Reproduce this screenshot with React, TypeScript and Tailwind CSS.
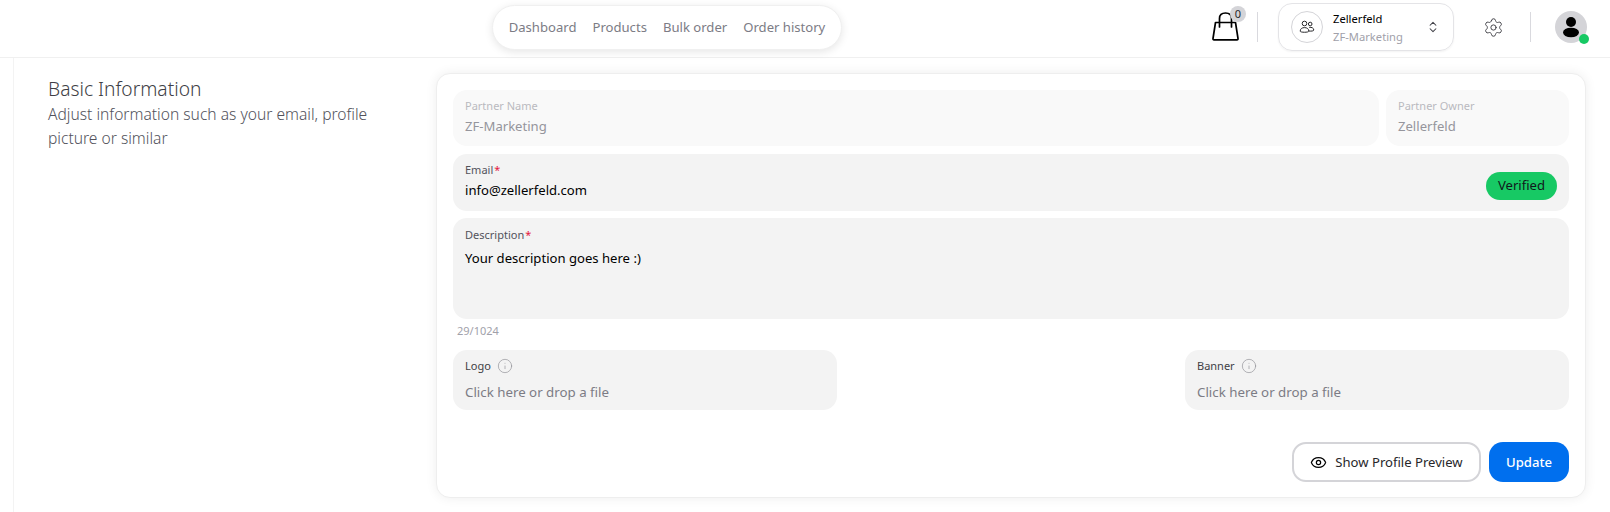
import { ChevronsUpDown, Eye, Info, Settings } from "lucide-react";

const font = "font-['Noto_Sans',sans-serif]";

function ReadonlyField({ label, value, className }: { label: string; value: string; className: string }) {
  return (
    <div className={`h-[56px] rounded-[14px] bg-[#f9f9f9] px-3 pt-[8px] ${className}`}>
      <div className="text-[11px] leading-[16px] text-[#b9b9bf]">{label}</div>
      <div className="mt-[2px] text-[13.1px] leading-[20px] text-[#95959c]">{value}</div>
    </div>
  );
}

function Required({ label }: { label: string }) {
  return (
    <div className="text-[11px] leading-[16px] text-[#52525b]">
      {label}
      <span className="ml-px text-[#e5173f]">*</span>
    </div>
  );
}

function UploadField({ label }: { label: string }) {
  return (
    <div className="h-[60px] w-[384px] rounded-[14px] bg-[#f3f3f3] px-3 pt-[8px]">
      <div className="flex h-[16px] items-center gap-[6px] text-[11px] text-[#3f3f46]">
        {label}
        <Info size={16} strokeWidth={1} className="text-[#8f8f96]" />
      </div>
      <div className="mt-[8px] text-[13.3px] leading-[20px] text-[#7c7c85]">Click here or drop a file</div>
    </div>
  );
}

export default function App() {
  return (
    <div className={`h-[512px] w-[1610px] overflow-hidden bg-white ${font}`}>
      <header className="flex h-[58px] items-center border-b border-[#f0f0f0] pb-[3px] pl-[492px]">
        <nav className="flex h-[45px] w-[350px] items-center justify-center gap-4 rounded-full border border-[#f0f0f0] bg-white pt-px text-[13.1px] text-[#7c7c85] shadow-[0_2px_8px_rgba(0,0,0,0.10)]">
          <span>Dashboard</span>
          <span>Products</span>
          <span>Bulk order</span>
          <span>Order history</span>
        </nav>

        <div className="relative ml-[369px] h-[32px] w-[28px]">
          {/* shopping bag */}
          <svg width="29" height="32" viewBox="0 0 29 32" fill="none" stroke="black" strokeWidth="1.7" strokeLinejoin="round" strokeLinecap="round">
            <path d="M4.5 11.5H24.5L27 27.5Q27.2 28.8 26 28.8H3Q1.8 28.8 2 27.5Z" />
            <path d="M8.5 16V7.5Q8.5 2 14.5 2Q20.5 2 20.5 7.5V16" />
          </svg>
          <span className="absolute -top-[5px] left-[19px] flex h-[16px] w-[16px] items-center justify-center rounded-full bg-[#d4d4d8] text-[11px] text-[#27272a]">0</span>
        </div>
        <div className="ml-[18px] h-[30px] w-px bg-[#d9d9de]" />

        <div className="ml-[20px] flex h-[48px] w-[176px] items-center rounded-[14px] border border-[#e4e4e7] pl-[12px] shadow-[0_1px_2px_rgba(0,0,0,0.05)]">
          <div className="flex h-[32px] w-[32px] items-center justify-center rounded-full border border-[#d4d4d8]">
            {/* two people */}
            <svg width="16" height="16" viewBox="0 0 16 16" fill="none" stroke="#27272a" strokeWidth="1">
              <circle cx="5.5" cy="4.5" r="2.3" />
              <circle cx="11.2" cy="5" r="1.8" />
              <path d="M1.2 12.2C1.2 9.8 3 8.6 5.5 8.6S9.8 9.8 9.8 12.2C9.8 13.6 1.2 13.6 1.2 12.2Z" />
              <path d="M10.2 8.4C12.6 8 14.8 9 14.8 11C14.8 12 12.4 12.3 10 12" />
            </svg>
          </div>
          <div className="ml-[10px] w-[93px] pt-[2px]">
            <div className="text-[11.2px] leading-[16px] text-black">Zellerfeld</div>
            <div className="mt-[2px] text-[11.2px] leading-[16px] text-[#a1a1aa]">ZF-Marketing</div>
          </div>
          <ChevronsUpDown size={14} strokeWidth={1.75} className="text-[#3f3f46]" />
        </div>

        <Settings size={21} strokeWidth={1.1} className="ml-[29px] text-[#3f3f46]" />
        <div className="ml-[26px] h-[30px] w-px bg-[#d9d9de]" />

        <div className="relative ml-[24px] flex h-[32px] w-[32px] items-center justify-center rounded-full bg-[#d4d4d8]">
          <svg width="18" height="22" viewBox="0 0 18 22" fill="black">
            <circle cx="9" cy="6" r="5" />
            <ellipse cx="9" cy="16.5" rx="8" ry="4.8" />
          </svg>
          <span className="absolute left-[24px] top-[23px] h-[10px] w-[10px] rounded-full bg-[#17c964]" />
        </div>
      </header>

      <main className="ml-[13px] flex h-[454px] border-l border-[#f3f3f3] pt-[15px]">
        <section className="w-[422px] pl-[34px]">
          <h2 className="pt-[2px] text-[19.2px] font-light leading-[27px] text-[#3f3f46]">Basic Information</h2>
          <p className="w-[345px] text-[15.6px] font-light leading-[24px] text-[#52525b]">
            Adjust information such as your email, profile picture or similar
          </p>
        </section>

        <section className="h-[425px] w-[1150px] rounded-[14px] border border-[#eeeeee] bg-white px-[16px] pt-[16px] shadow-[0_0_12px_rgba(0,0,0,0.07)]">
          <div className="flex gap-[7px]">
            <ReadonlyField label="Partner Name" value="ZF-Marketing" className="flex-1" />
            <ReadonlyField label="Partner Owner" value="Zellerfeld" className="w-[183px]" />
          </div>

          <div className="mt-[8px] flex h-[57px] items-center justify-between rounded-[14px] bg-[#f3f3f3] px-3">
            <div className="-mt-[4px]">
              <Required label="Email" />
              <div className="mt-[2px] text-[13.1px] leading-[20px] text-black">info@zellerfeld.com</div>
            </div>
            <span className="mt-[7px] flex h-[28px] w-[71px] items-center justify-center rounded-full bg-[#17c964] text-[13.1px] text-[#11181c]">Verified</span>
          </div>

          <div className="mt-[7px] h-[101px] rounded-[14px] bg-[#f3f3f3] px-3 pt-[9px]">
            <Required label="Description" />
            <div className="mt-[5px] text-[13.1px] leading-[20px] text-black">Your description goes here :)</div>
          </div>
          <div className="mt-[4px] pl-[4px] text-[11px] leading-[16px] text-[#a1a1aa]">29/1024</div>

          <div className="mt-[11px] flex justify-between">
            <UploadField label="Logo" />
            <UploadField label="Banner" />
          </div>

          <div className="mt-[32px] flex justify-end gap-[8px]">
            <button className="flex h-[40px] w-[189px] items-center justify-center gap-[8px] rounded-[14px] border-2 border-[#d4d4d8] bg-white pt-px text-[13.1px] text-[#27272a]">
              <Eye size={17} strokeWidth={1.75} className="text-black" />
              Show Profile Preview
            </button>
            <button className="h-[40px] w-[80px] rounded-[14px] bg-[#006fee] pt-px text-[13.1px] font-medium text-white">Update</button>
          </div>
        </section>
      </main>
    </div>
  );
}
